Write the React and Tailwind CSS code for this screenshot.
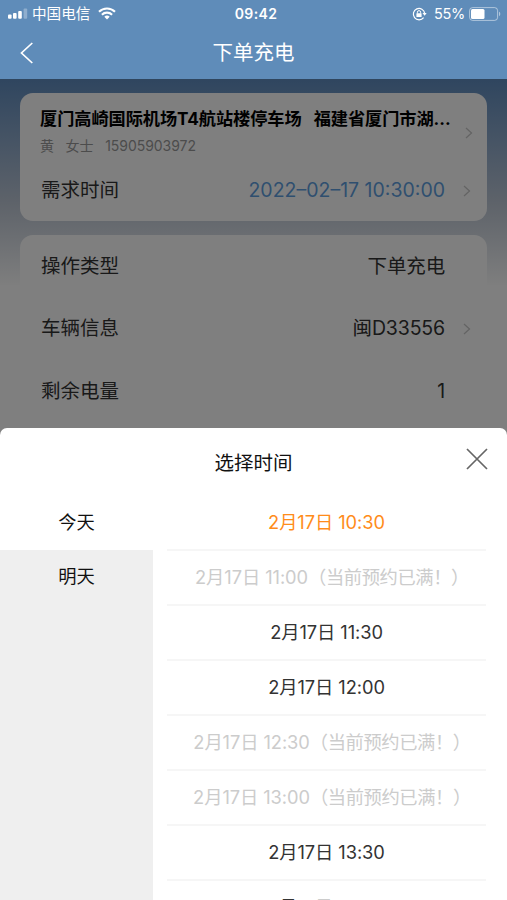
import React, { useState } from 'react';

const days = ['今天', '明天'];

const slots = [
  { time: '2月17日 10:30', full: false },
  { time: '2月17日 11:00', full: true },
  { time: '2月17日 11:30', full: false },
  { time: '2月17日 12:00', full: false },
  { time: '2月17日 12:30', full: true },
  { time: '2月17日 13:00', full: true },
  { time: '2月17日 13:30', full: false },
  { time: '2月17日 14:00', full: false },
];

function Chevron() {
  return (
    <svg className="block shrink-0" width="8" height="12" viewBox="0 0 8 12" fill="none" stroke="#c8c8c8" strokeWidth="1.3">
      <path d="M1 1l5.5 5L1 11" />
    </svg>
  );
}

function StatusBar() {
  return (
    <div className="grid h-[27px] grid-cols-[1fr_auto_1fr] items-center text-[14px] leading-none">
      <div className="flex items-center pl-2">
        <svg width="20" height="11" viewBox="0 0 20 11" fill="#fff">
          <rect x="0" y="6.5" width="3.6" height="4.2" rx="1" />
          <rect x="5" y="5" width="3.6" height="5.7" rx="1" />
          <rect x="10.2" y="3" width="3.6" height="7.7" rx="1" />
          <rect x="15.6" y="0.5" width="3.6" height="10.2" rx="1" opacity="0.3" />
        </svg>
        <span className="ml-1 pt-0.5 text-[14.6px]">中国电信</span>
        <svg className="ml-2" width="18" height="13" viewBox="0 0 18 13" fill="none" stroke="#fff" strokeWidth="2.1">
          <path d="M1 4.7a11.5 11.5 0 0 1 16 0" />
          <path d="M3.9 7.7a7.3 7.3 0 0 1 10.2 0" />
          <path d="M9 12.4L6.3 9.7a3.9 3.9 0 0 1 5.4 0z" fill="#fff" stroke="none" />
        </svg>
      </div>
      <span className="pl-[5px] pt-px text-[14px] font-semibold tracking-[0.4px]">09:42</span>
      <div className="flex items-center justify-end pr-1.5">
        <svg width="15" height="14" viewBox="0 0 15 14" fill="none" stroke="#fff">
          <path d="M11.6 10.6A5.7 5.7 0 1 1 12.7 6.4" strokeWidth="1.2" />
          <path d="M10.5 6h4.2l-2.1 2.8z" fill="#fff" stroke="none" />
          <rect x="4.4" y="6.2" width="5.2" height="3.9" rx="0.5" fill="#fff" stroke="none" />
          <path d="M5.4 6.4V5.2a1.6 1.6 0 0 1 3.2 0v1.2" strokeWidth="1" />
        </svg>
        <span className="ml-[7px] pt-0.5 text-[14.5px] tracking-[-0.3px]">55%</span>
        <svg className="ml-1" width="32" height="14" viewBox="0 0 32 14" fill="none">
          <rect x="0.6" y="0.6" width="28" height="12.8" rx="3" stroke="#fff" strokeOpacity="0.5" strokeWidth="1" />
          <rect x="2" y="2" width="13.5" height="10" rx="1.5" fill="#fff" />
          <path d="M30 4.8c1.7.6 1.7 3.8 0 4.4z" fill="#fff" fillOpacity="0.5" />
        </svg>
      </div>
    </div>
  );
}

function InfoRow({ label, value, arrow }) {
  return (
    <div className="flex h-[62.5px] items-center pl-[21px] pr-4 text-[19.5px] text-[#333]">
      <span className="flex-1">{label}</span>
      <span className="mr-[18px] tracking-[-0.15px]">{value}</span>
      <span className="w-2">{arrow && <Chevron />}</span>
    </div>
  );
}

export default function App() {
  const [day, setDay] = useState(0);
  const [selected, setSelected] = useState(0);

  return (
    <div className="flex h-[900px] w-full flex-col overflow-hidden bg-[#808080] font-['Inter','Noto_Sans_CJK_SC',sans-serif]">
      <header className="h-[79px] shrink-0 bg-[#5f8cb9] text-white">
        <StatusBar />
        <div className="grid h-[52px] grid-cols-[60px_1fr_60px] items-center">
          <svg className="ml-5" width="14" height="22" viewBox="0 0 14 22" fill="none" stroke="#fff" strokeWidth="1.7">
            <path d="M12.3 1L1.5 11l10.8 10" />
          </svg>
          <h1 className="text-center text-[20.5px]">下单充电</h1>
        </div>
      </header>

      <main className="relative h-[349px] shrink-0 overflow-hidden bg-white px-5 pt-3.5">
        <div className="absolute inset-x-0 top-0 h-[206px] bg-linear-to-b from-[#5f8cbf] via-[#bcc6d4] via-60% to-[#fdfdfd]" />

        <section className="relative h-[128px] rounded-[13px] bg-white">
          <div className="flex items-center pl-5 pr-3.5 pt-3.5">
            <div className="min-w-0 flex-1">
              <div className="h-6 whitespace-pre text-[17.2px] font-bold leading-6 tracking-[-0.06px] text-black">厦门高崎国际机场T4航站楼停车场   福建省厦门市湖...</div>
              <div className="mt-[3px] whitespace-pre text-[14px] leading-6 tracking-[-0.05px] text-[#999]">黄   女士   15905903972</div>
            </div>
            <Chevron />
          </div>
          <div className="mt-3 flex h-[42px] items-center pl-[21px] pr-4 text-[19.5px]">
            <span className="flex-1 text-[#333]">需求时间</span>
            <span className="mr-[18px] text-[#5f9fdf]">2022–02–17 10:30:00</span>
            <Chevron />
          </div>
        </section>

        <section className="relative mt-3.5 h-[220px] rounded-t-[13px] bg-white">
          <InfoRow label="操作类型" value="下单充电" />
          <InfoRow label="车辆信息" value="闽D33556" arrow />
          <InfoRow label="剩余电量" value="1" />
        </section>

        <div className="absolute inset-0 bg-black/50" />
      </main>

      <div className="flex min-h-0 flex-1 flex-col overflow-hidden rounded-t-[7px] bg-white">
        <div className="grid h-[68px] shrink-0 grid-cols-[60px_1fr_60px] items-center">
          <h2 className="col-start-2 pt-[3px] text-center text-[19.5px] text-[#111]">选择时间</h2>
          <button className="ml-[19px] mb-[7px] w-[22px]">
            <svg width="22" height="22" viewBox="0 0 22 22" fill="none" stroke="#666" strokeWidth="1.7">
              <path d="M1 1l20 20M21 1L1 21" />
            </svg>
          </button>
        </div>

        <div className="flex min-h-0 flex-1">
          <aside className="w-[153px] shrink-0 bg-[#efefef]">
            {days.map((d, idx) => (
              <div
                key={d}
                onClick={() => setDay(idx)}
                className={`flex h-[54px] items-center justify-center text-[18.3px] text-[#111] ${idx === day ? 'bg-white' : ''}`}
              >
                {d}
              </div>
            ))}
          </aside>

          <ul className="ml-3.5 w-[319px] overflow-hidden">
            {slots.map((s, idx) => (
              <li
                key={s.time}
                onClick={() => !s.full && setSelected(idx)}
                className={`flex h-[55px] items-center justify-center whitespace-nowrap border-b-2 border-[#f6f6f6] text-[18.3px] tracking-[-0.08px] ${
                  s.full ? 'text-[#ccc]' : idx === selected ? 'text-[#ff8c1a]' : 'text-[#333]'
                }`}
              >
                {s.time}
                {s.full && <span className="-mr-[11px] tracking-[-0.4px]">（当前预约已满！）</span>}
              </li>
            ))}
          </ul>
        </div>
      </div>
    </div>
  );
}
